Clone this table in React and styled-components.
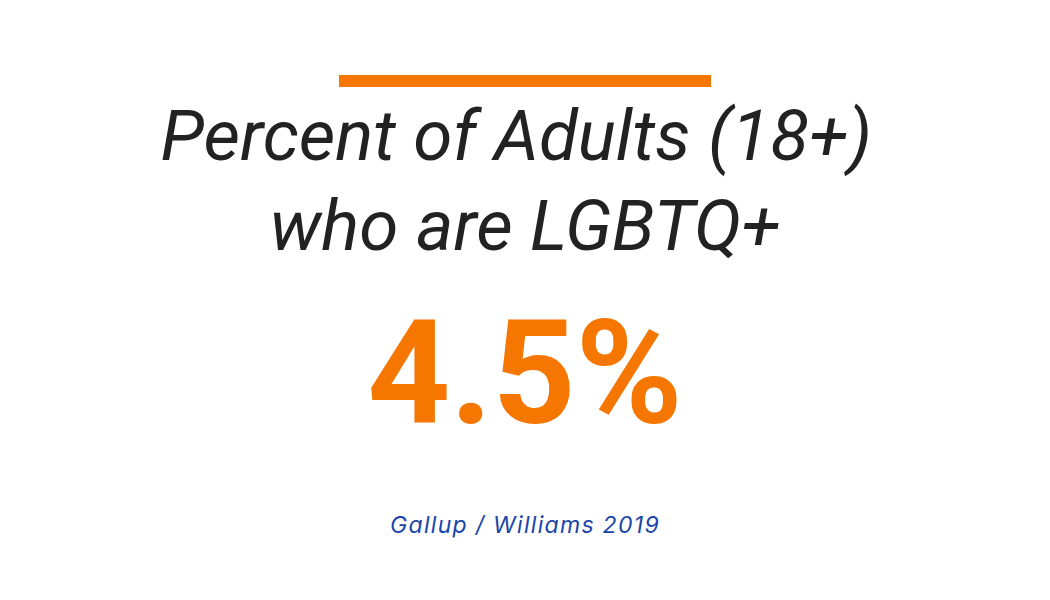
import React from "react";
import styled, { createGlobalStyle } from "styled-components";

const Global = createGlobalStyle`
  html, body { margin: 0; padding: 0; background: #ffffff; }
  body { font-family: Roboto, "Liberation Sans", sans-serif; }
`;

const Page = styled.div`
  width: 1050px;
  height: 600px;
  display: flex;
  flex-direction: column;
  align-items: center;
  padding-top: 75px;
  box-sizing: border-box;
`;

const Bar = styled.div`
  width: 372px;
  height: 12px;
  background: #f57600;
`;

const Title = styled.h1`
  margin: 4px 0 0;
  font-family: Roboto, sans-serif;
  font-style: italic;
  font-weight: 400;
  font-size: 71px;
  line-height: 90px;
  color: #222222;
  text-align: center;
  white-space: pre;
`;

const Figure = styled.div`
  margin-top: 30px;
  font-family: Roboto, sans-serif;
  font-weight: 700;
  font-size: 145px;
  line-height: 145px;
  color: #f57600;
`;

const Source = styled.div`
  margin-top: 64px;
  font-family: Inter, sans-serif;
  font-feature-settings: "cv11" 1;
  font-style: italic;
  font-size: 23px;
  letter-spacing: 1.3px;
  line-height: 30px;
  color: #1b45a8;
`;

export default function App() {
  return (
    <>
      <Global />
      <Page>
        <Bar />
        <Title>{"Percent of Adults (18+) \nwho are LGBTQ+"}</Title>
        <Figure>4.5%</Figure>
        <Source>Gallup / Williams 2019</Source>
      </Page>
    </>
  );
}
